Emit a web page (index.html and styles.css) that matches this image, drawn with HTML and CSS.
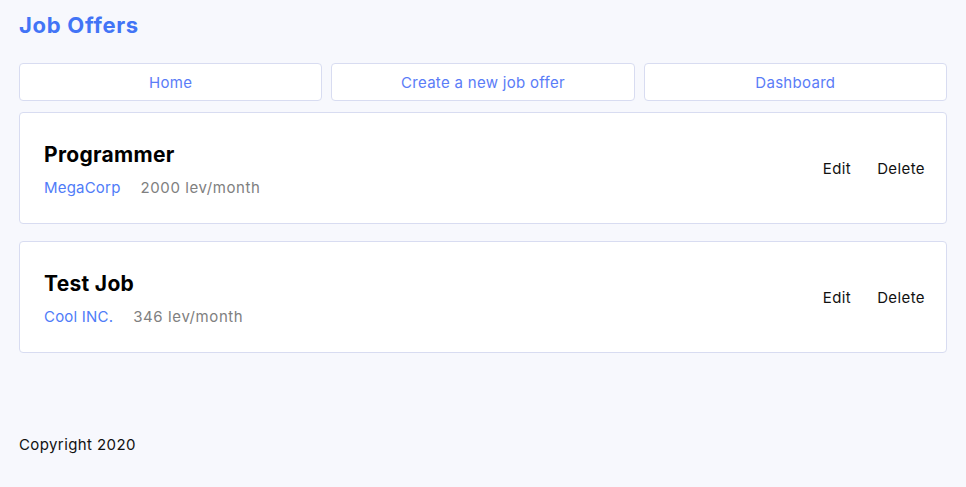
FILE: index.html
```html
<!DOCTYPE html>
<html lang="en">
<head>
<meta charset="utf-8">
<title>Job Offers</title>
<link rel="stylesheet" href="styles.css">
</head>
<body>
<header class="header">
  <h1 class="brand">Job Offers</h1>
  <nav class="nav">
    <a class="nav-btn" href="#">Home</a>
    <a class="nav-btn" href="#">Create a new job offer</a>
    <a class="nav-btn" href="#">Dashboard</a>
  </nav>
</header>
<main class="list">
  <article class="card">
    <div class="card-info">
      <h2 class="job-title">Programmer</h2>
      <div class="meta">
        <a class="company" href="#">MegaCorp</a>
        <span class="salary">2000 lev/month</span>
      </div>
    </div>
    <div class="actions">
      <a class="action" href="#">Edit</a>
      <a class="action" href="#">Delete</a>
    </div>
  </article>
  <article class="card">
    <div class="card-info">
      <h2 class="job-title">Test Job</h2>
      <div class="meta">
        <a class="company" href="#">Cool INC.</a>
        <span class="salary">346 lev/month</span>
      </div>
    </div>
    <div class="actions">
      <a class="action" href="#">Edit</a>
      <a class="action" href="#">Delete</a>
    </div>
  </article>
</main>
<footer class="footer">Copyright 2020</footer>
</body>
</html>
```
FILE: styles.css
```css
* { box-sizing: border-box; }
html, body { margin: 0; }
body {
  background: #f7f8fd;
  font-family: "Inter", "Liberation Sans", sans-serif;
  color: #111;
  padding: 0 19px;
}
a { text-decoration: none; }
.header { padding-top: 12px; }
.brand {
  margin: 0;
  font-size: 22px;
  line-height: 26px;
  font-weight: 700;
  color: #4274f6;
  letter-spacing: 0.7px;
}
.nav {
  margin-top: 25px;
  display: grid;
  grid-template-columns: repeat(3, 1fr);
  gap: 9px;
}
.nav-btn {
  display: flex;
  align-items: center;
  justify-content: center;
  height: 38px;
  background: #fff;
  border: 1px solid #d8dcf1;
  border-radius: 4px;
  color: #5a7cf7;
  font-size: 15px;
  letter-spacing: 0.3px;
}
.list {
  margin-top: 11px;
  display: flex;
  flex-direction: column;
  gap: 17px;
}
.card {
  height: 112px;
  background: #fff;
  border: 1px solid #d8dcf1;
  border-radius: 4px;
  display: flex;
  align-items: center;
  justify-content: space-between;
  padding: 0 21px 0 24px;
}
.card-info { padding-top: 3px; }
.job-title {
  margin: 0;
  font-size: 21px;
  line-height: 26px;
  font-weight: 700;
  color: #000;
  letter-spacing: 0.3px;
}
.meta {
  margin-top: 10px;
  display: flex;
  gap: 20px;
  font-size: 15px;
  line-height: 20px;
}
.company { color: #4f7cf8; letter-spacing: 0.2px; }
.salary { color: #808080; letter-spacing: 0.6px; }
.actions {
  display: flex;
  gap: 26px;
  font-size: 15px;
  letter-spacing: 0.4px;
}
.action { color: #111; }
.footer {
  margin-top: 82px;
  font-size: 15px;
  line-height: 20px;
  color: #111;
  letter-spacing: 0.4px;
}
```
